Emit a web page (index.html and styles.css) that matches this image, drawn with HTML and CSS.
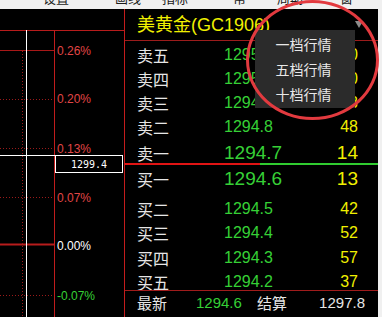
FILE: index.html
```html
<!DOCTYPE html>
<html lang="zh-CN">
<head>
<meta charset="utf-8">
<title>美黄金 五档行情</title>
<link rel="stylesheet" href="styles.css">
</head>
<body>
<div class="app">
  <div class="topbar">
    <span class="tb tb1">设置</span>
    <span class="tb tb2">画线</span>
    <span class="tb tb3">指标</span>
    <span class="tb tb4">帮</span>
    <span class="tb tb5">周期</span>
    <span class="tb tb6">窗</span>
  </div>
  <div class="main">
    <svg class="chart" width="124" height="308" viewBox="0 0 124 308">
      <line x1="0" y1="21.5" x2="124" y2="21.5" stroke="#b81c1c"/>
      <line x1="0" y1="41.5" x2="54" y2="41.5" stroke="#a81818"/>
      <line x1="0" y1="90.5" x2="54" y2="90.5" stroke="#9a1a1a" stroke-dasharray="1 2"/>
      <line x1="0" y1="139.5" x2="54" y2="139.5" stroke="#9a1a1a" stroke-dasharray="1 2"/>
      <line x1="0" y1="188.5" x2="54" y2="188.5" stroke="#9a1a1a" stroke-dasharray="1 2"/>
      <line x1="0" y1="235.5" x2="54" y2="235.5" stroke="#b81c1c" stroke-width="2"/>
      <line x1="0" y1="286.5" x2="54" y2="286.5" stroke="#9a1a1a" stroke-dasharray="1 2"/>
      <line x1="22.5" y1="42" x2="22.5" y2="308" stroke="#9a1a1a" stroke-dasharray="1 2"/>
      <line x1="54.5" y1="21" x2="54.5" y2="308" stroke="#c01c1c"/>
      <line x1="26.5" y1="21" x2="26.5" y2="308" stroke="#ffffff"/>
      <line x1="0" y1="146.5" x2="55" y2="146.5" stroke="#ffffff"/>
      <text class="axis red" x="57" y="42">0.26%</text>
      <text class="axis red" x="57" y="90">0.20%</text>
      <text class="axis red" x="57" y="140">0.13%</text>
      <text class="axis red" x="57" y="189">0.07%</text>
      <text class="axis white" x="57" y="237">0.00%</text>
      <text class="axis green" x="57" y="287">-0.07%</text>
      <rect x="55.5" y="146.5" width="67" height="17" fill="#000" stroke="#ffffff"/>
      <text class="cross" x="89" y="155.5">1299.4</text>
    </svg>
    <div class="panel">
      <div class="header">
        <span class="title">美黄金(GC1906)</span>
        <span class="caret"></span>
      </div>
      <div class="sell">
        <div class="row"><span class="lbl">卖五</span><span class="px">1295.1</span><span class="vol">20</span></div>
        <div class="row"><span class="lbl">卖四</span><span class="px">1295.0</span><span class="vol">30</span></div>
        <div class="row"><span class="lbl">卖三</span><span class="px">1294.9</span><span class="vol">18</span></div>
        <div class="row"><span class="lbl">卖二</span><span class="px">1294.8</span><span class="vol">48</span></div>
        <div class="row big"><span class="lbl">卖一</span><span class="px">1294.7</span><span class="vol">14</span></div>
      </div>
      <div class="divider"></div>
      <div class="buy">
        <div class="row big"><span class="lbl">买一</span><span class="px">1294.6</span><span class="vol">13</span></div>
        <div class="row"><span class="lbl">买二</span><span class="px">1294.5</span><span class="vol">42</span></div>
        <div class="row"><span class="lbl">买三</span><span class="px">1294.4</span><span class="vol">52</span></div>
        <div class="row"><span class="lbl">买四</span><span class="px">1294.3</span><span class="vol">57</span></div>
        <div class="row"><span class="lbl">买五</span><span class="px">1294.2</span><span class="vol">37</span></div>
      </div>
      <div class="footer">
        <span class="f-lbl">最新</span>
        <span class="f-px">1294.6</span>
        <span class="f-lbl2">结算</span>
        <span class="f-val">1297.8</span>
      </div>
    </div>
  </div>
  <div class="menu">
    <div class="menu-item">一档行情</div>
    <div class="menu-item">五档行情</div>
    <div class="menu-item">十档行情</div>
  </div>
  <div class="ring"></div>
</div>
</body>
</html>
```
FILE: styles.css
```css
* {
  box-sizing: border-box;
  margin: 0;
  padding: 0;
}

html, body {
  width: 382px;
  height: 317px;
  overflow: hidden;
}

body {
  background: #f0f0f0;
  font-family: "Liberation Sans", "Noto Sans CJK SC", sans-serif;
}

.app {
  position: relative;
  width: 382px;
  height: 317px;
  background: #f0f0f0;
  overflow: hidden;
}

/* cut-off toolbar above */
.topbar {
  height: 9px;
  overflow: hidden;
  display: flex;
  align-items: flex-start;
  font-family: "Noto Sans CJK SC", sans-serif;
  font-size: 13px;
  line-height: 13px;
  color: #1a1a1a;
}

.tb {
  margin-top: -9px;
  white-space: nowrap;
}

.tb1 { margin-left: 43px; }
.tb2 { margin-left: 46px; }
.tb3 { margin-left: 21px; }
.tb4 { margin-left: 45px; }
.tb5 { margin-left: 31px; }
.tb6 { margin-left: 37px; }

.main {
  display: flex;
  width: 378px;
  height: 308px;
  background: #000;
}

/* chart */
.chart {
  display: block;
  flex: none;
  width: 124px;
  height: 308px;
}

.axis {
  font-family: "Liberation Sans", sans-serif;
  font-size: 12px;
  dominant-baseline: central;
}

.axis.red { fill: #e04646; }
.axis.white { fill: #ffffff; }
.axis.green { fill: #36d036; }

.cross {
  font-family: "DejaVu Sans Mono", monospace;
  font-size: 10px;
  fill: #ffffff;
  text-anchor: middle;
  dominant-baseline: central;
}

/* quote panel */
.panel {
  flex: none;
  width: 254px;
  border-left: 1px solid #c41c1c;
  display: flex;
  flex-direction: column;
}

.header {
  flex: none;
  height: 32px;
  border-bottom: 1px solid #9c1c1c;
  display: flex;
  align-items: center;
  justify-content: space-between;
  padding: 0 15px 0 12px;
}

.title {
  color: #f0f000;
  font-size: 18px;
  line-height: 20px;
}

.caret {
  width: 0;
  height: 0;
  border-left: 4.5px solid transparent;
  border-right: 4.5px solid transparent;
  border-top: 7px solid #8c8c8c;
}

.sell {
  flex: none;
  height: 122px;
  display: grid;
  grid-template-rows: repeat(5, 1fr);
}

.row {
  display: grid;
  grid-template-columns: 87px 1fr auto;
  align-items: center;
  padding: 4px 20px 0 12px;
  font-size: 16px;
  line-height: 18px;
}

.sell .row.big {
  padding-top: 6px;
}

.lbl {
  color: #e6e6e6;
  font-family: "Noto Sans CJK SC", sans-serif;
}

.px { color: #36d036; }
.vol { color: #f0f000; }

.big .px,
.big .vol {
  font-size: 19px;
  line-height: 20px;
}

.divider {
  flex: none;
  height: 2px;
  background: linear-gradient(to right, #e01414 0, #e01414 135px, #30cc30 135px, #30cc30 100%);
}

.buy {
  flex: none;
  height: 125px;
  display: flex;
  flex-direction: column;
}

.buy .row {
  height: 24.25px;
  padding-top: 7px;
}

.buy .row.big {
  height: 28px;
  padding-top: 0;
}

.footer {
  flex: 1;
  border-top: 1px solid #a01c1c;
  display: flex;
  align-items: center;
  padding: 0 13px 2px 12px;
  font-size: 15px;
  line-height: 18px;
}

.f-lbl,
.f-lbl2 {
  color: #e6e6e6;
  font-family: "Noto Sans CJK SC", sans-serif;
}

.f-lbl { width: 59px; }
.f-px { width: 61px; color: #36d036; }
.f-val { margin-left: auto; color: #e6e6e6; }

/* dropdown menu overlay */
.menu {
  position: absolute;
  left: 255px;
  top: 30px;
  width: 100px;
  height: 78px;
  padding: 1px 3px 0 0;
  background: #2b2b2b;
  display: flex;
  flex-direction: column;
}

.menu-item {
  height: 25px;
  display: flex;
  align-items: center;
  justify-content: center;
  color: #e8e8e8;
  font-family: "Noto Sans CJK SC", sans-serif;
  font-size: 14px;
}

/* annotation ring */
.ring {
  position: absolute;
  left: 246px;
  top: 0;
  width: 133px;
  height: 120px;
  border: 3px solid #e23a3f;
  border-radius: 50%;
}
```
